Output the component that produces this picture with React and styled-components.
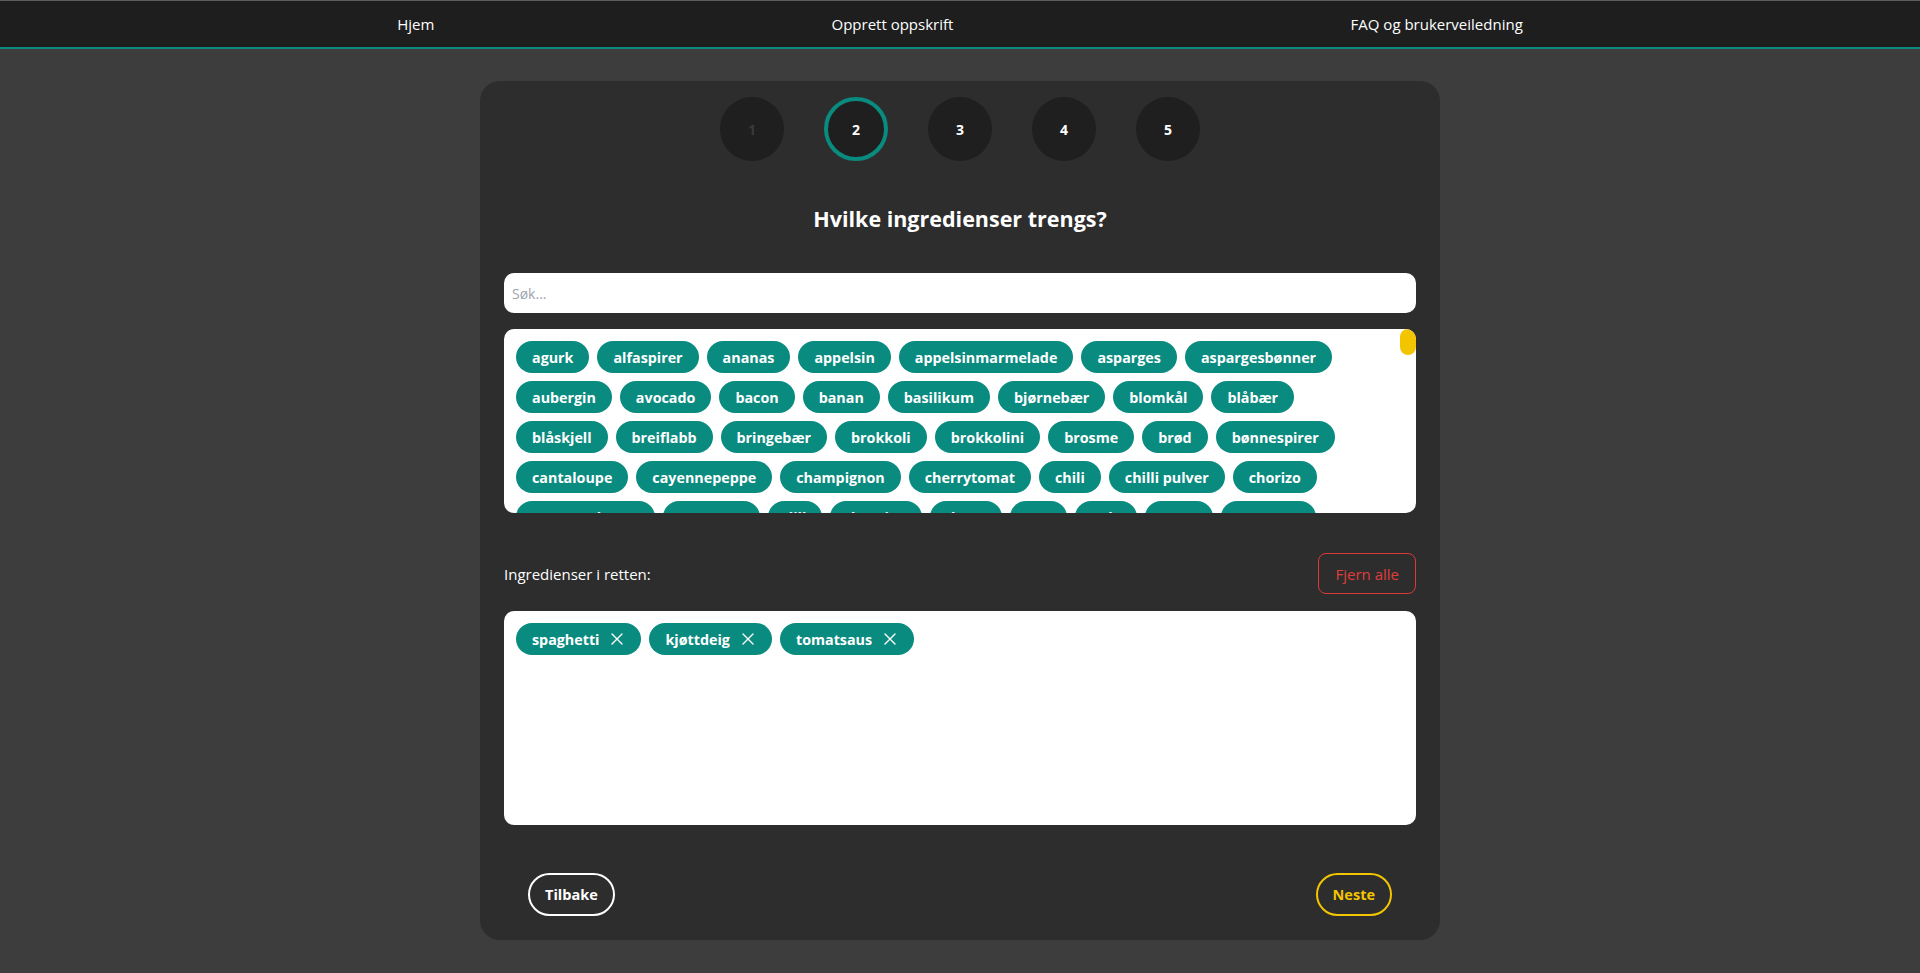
import React, { useState } from 'react';
import styled, { createGlobalStyle } from 'styled-components';

const TEAL = '#0a8b7f';
const YELLOW = '#f2c500';
const FONT = `"Segoe UI", "Open Sans", "Noto Sans", sans-serif`;

const GlobalStyle = createGlobalStyle`
  html, body {
    margin: 0;
    padding: 0;
    background: #3d3d3d;
    font-family: ${FONT};
    color: #ffffff;
  }
  * {
    box-sizing: border-box;
  }
`;

const Nav = styled.nav`
  display: flex;
  justify-content: space-evenly;
  align-items: center;
  height: 49px;
  background: #1e1e1e;
  border-top: 1px solid #5c5c5c;
  border-bottom: 2px solid ${TEAL};
`;

const NavLink = styled.a`
  color: #ffffff;
  font-size: 15px;
  text-decoration: none;
  cursor: pointer;
`;

const Card = styled.main`
  width: 960px;
  margin: 32px auto;
  background: #2d2d2d;
  border-radius: 20px;
  padding: 16px 24px 24px;
  display: flex;
  flex-direction: column;
`;

const Steps = styled.div`
  display: flex;
  justify-content: center;
  gap: 40px;
`;

const Step = styled.div`
  width: 64px;
  height: 64px;
  border-radius: 50%;
  background: #1f1f1f;
  border: ${p => (p.$active ? `4px solid ${TEAL}` : 'none')};
  display: flex;
  align-items: center;
  justify-content: center;
  font-size: 14px;
  font-weight: 700;
  color: ${p => (p.$done ? '#3b3b3b' : '#ffffff')};
`;

const Title = styled.h2`
  margin: 43px 0 40px;
  text-align: center;
  font-size: 21.5px;
  line-height: 29px;
  font-weight: 700;
`;

const Search = styled.input`
  height: 40px;
  border: none;
  border-radius: 10px;
  padding: 0 8px;
  font-family: ${FONT};
  font-size: 14px;
  color: #222;
  outline: none;
  &::placeholder {
    color: #9ca3af;
  }
`;

const Frame = styled.div`
  position: relative;
  margin-top: ${p => p.$gap}px;
  height: ${p => p.$height}px;
  background: #ffffff;
  border-radius: 10px;
  overflow: hidden;
`;

const ChipList = styled.div`
  height: 100%;
  padding: 12px ${p => (p.$scroll ? 28 : 12)}px 12px 12px;
  display: flex;
  flex-wrap: wrap;
  align-content: flex-start;
  gap: 8px;
  overflow: hidden;
`;

const ScrollThumb = styled.div`
  position: absolute;
  top: 0;
  right: 0;
  width: 16px;
  height: 26px;
  border-radius: 8px;
  background: ${YELLOW};
`;

const Chip = styled.button`
  height: 32px;
  padding: 0 16px;
  border: none;
  border-radius: 16px;
  background: ${TEAL};
  color: #ffffff;
  font-family: ${FONT};
  font-size: 14.3px;
  font-weight: 700;
  display: inline-flex;
  align-items: center;
  gap: 10px;
  white-space: nowrap;
  cursor: pointer;
`;

const LabelRow = styled.div`
  margin-top: 40px;
  display: flex;
  justify-content: space-between;
  align-items: center;
`;

const Label = styled.span`
  font-size: 15px;
`;

const RemoveAll = styled.button`
  height: 41px;
  padding: 0 16px;
  background: transparent;
  border: 1px solid #d83a3a;
  border-radius: 8px;
  color: #e03c3c;
  font-family: ${FONT};
  font-size: 15px;
  cursor: pointer;
`;

const Footer = styled.div`
  margin-top: 48px;
  padding: 0 24px;
  display: flex;
  justify-content: space-between;
`;

const PillButton = styled.button`
  height: 43px;
  padding: 0 15px;
  background: transparent;
  border: 2px solid ${p => p.$color};
  border-radius: 999px;
  color: ${p => p.$color};
  font-family: ${FONT};
  font-size: 14.5px;
  font-weight: 700;
  cursor: pointer;
`;

const CloseIcon = () => (
  <svg width="16" height="16" viewBox="0 0 16 16" fill="none">
    <path d="M3 3L13 13M13 3L3 13" stroke="#ffffff" strokeWidth="1.4" strokeLinecap="round" />
  </svg>
);

const INGREDIENTS = [
  'agurk', 'alfaspirer', 'ananas', 'appelsin', 'appelsinmarmelade', 'asparges', 'aspargesbønner',
  'aubergin', 'avocado', 'bacon', 'banan', 'basilikum', 'bjørnebær', 'blomkål', 'blåbær',
  'blåskjell', 'breiflabb', 'bringebær', 'brokkoli', 'brokkolini', 'brosme', 'brød', 'bønnespirer',
  'cantaloupe', 'cayennepeppe', 'champignon', 'cherrytomat', 'chili', 'chilli pulver', 'chorizo',
  'cottage cheese', 'couscous', 'dill', 'dressing', 'druer', 'egg', 'eple', 'erter', 'estragon',
  'fennikel', 'fetaost', 'fiskesaus', 'fløte', 'fransk sennep', 'frosne erter', 'gaffelbiter',
  'gressløk', 'grønnkål', 'gulrot', 'hasselnøtter', 'havre', 'havregryn', 'helkornpasta', 'hodekål',
  'honning', 'hummer', 'hvetemel', 'hvitløk', 'hvitvin', 'ingefær', 'isbergsalat', 'jordbær',
  'jordskokk', 'kalkun', 'kanel', 'kapers', 'kardemomme', 'karri', 'kassler', 'kikerter',
  'kirsebær', 'kiwi', 'kokosmelk', 'koriander', 'krabbe', 'kremfløte', 'kylling', 'kyllingfilet',
  'laks', 'lam', 'laurbærblad', 'lime', 'linser', 'løk', 'mais', 'makrell', 'mandler', 'mango',
  'margarin', 'melk', 'mozzarella', 'muskatnøtt', 'mynte', 'nellik', 'nudler', 'oliven',
  'olivenolje', 'oregano', 'ost', 'paprika', 'parmesan', 'pasta', 'pastinakk', 'peanøtter',
  'pepper', 'persille', 'pinjekjerner', 'pære', 'pølse', 'potet', 'purre', 'reker', 'rips', 'ris',
  'rosenkål', 'rosmarin', 'rødbeter', 'rødløk', 'rødvin', 'rømme', 'salat', 'salt', 'sardiner',
  'selleri', 'sennep', 'sitron', 'sjalottløk', 'sjokolade', 'skinke', 'smør', 'soyasaus', 'spinat',
  'squash', 'sukker', 'sukkererter', 'svinekjøtt', 'sopp', 'søtpotet', 'tomat', 'tomatpuré',
  'timian', 'torsk', 'tunfisk', 'valnøtter', 'vaniljesukker', 'vannmelon', 'yoghurt', 'ørret',
  'østers',
];

export default function App() {
  const [selected, setSelected] = useState(['spaghetti', 'kjøttdeig', 'tomatsaus']);
  const [query, setQuery] = useState('');

  const visible = INGREDIENTS.filter(i => i.includes(query.toLowerCase()));

  return (
    <>
      <GlobalStyle />
      <Nav>
        <NavLink>Hjem</NavLink>
        <NavLink>Opprett oppskrift</NavLink>
        <NavLink>FAQ og brukerveiledning</NavLink>
      </Nav>
      <Card>
        <Steps>
          {[1, 2, 3, 4, 5].map(n => (
            <Step key={n} $active={n === 2} $done={n < 2}>{n}</Step>
          ))}
        </Steps>
        <Title>Hvilke ingredienser trengs?</Title>
        <Search
          placeholder="Søk..."
          value={query}
          onChange={e => setQuery(e.target.value)}
        />
        <Frame $gap={16} $height={184}>
          <ChipList $scroll>
            {visible.map(i => (
              <Chip key={i} onClick={() => !selected.includes(i) && setSelected([...selected, i])}>
                {i}
              </Chip>
            ))}
          </ChipList>
          <ScrollThumb />
        </Frame>
        <LabelRow>
          <Label>Ingredienser i retten:</Label>
          <RemoveAll onClick={() => setSelected([])}>Fjern alle</RemoveAll>
        </LabelRow>
        <Frame $gap={17} $height={214}>
          <ChipList>
            {selected.map(i => (
              <Chip key={i} onClick={() => setSelected(selected.filter(s => s !== i))}>
                {i}
                <CloseIcon />
              </Chip>
            ))}
          </ChipList>
        </Frame>
        <Footer>
          <PillButton $color="#ffffff">Tilbake</PillButton>
          <PillButton $color={YELLOW}>Neste</PillButton>
        </Footer>
      </Card>
    </>
  );
}
